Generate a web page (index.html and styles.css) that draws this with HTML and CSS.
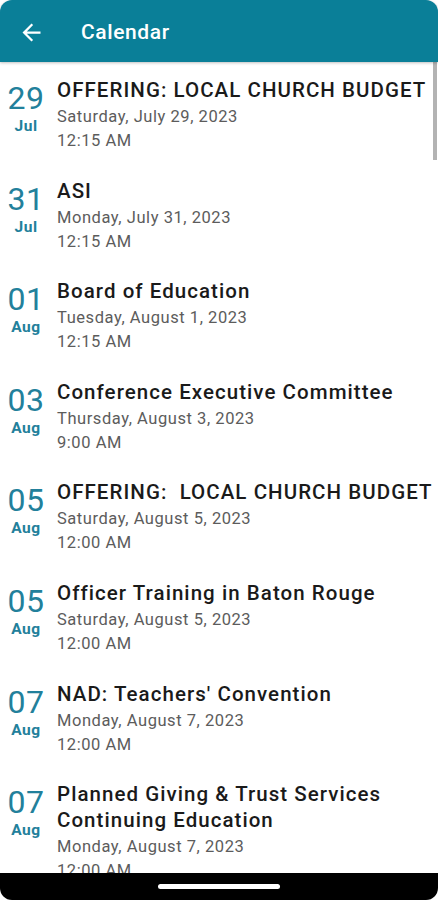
FILE: index.html
```html
<!DOCTYPE html>
<html>
<head>
    <meta charset="utf-8" />
    <title>Calendar</title>
    <meta name="viewport" content="width=device-width, initial-scale=1">
    <link rel="stylesheet" href="styles.css">
</head>
<body>
    <div class="screen">
        <div class="app-bar">
            <svg class="back" viewBox="0 0 24 24" width="27" height="27">
                <path d="M20 11H7.83l5.59-5.59L12 4l-8 8 8 8 1.41-1.41L7.83 13H20v-2z" fill="#fff"/>
            </svg>
            <h1>Calendar</h1>
        </div>

        <div class="events">
            <div class="scrollbar"></div>

            <div class="event">
                <div class="day">
                    <p class="num">29</p>
                    <p class="month">Jul</p>
                </div>
                <div class="info">
                    <p class="title">OFFERING: LOCAL CHURCH BUDGET</p>
                    <p class="when">Saturday, July 29, 2023</p>
                    <p class="when">12:15 AM</p>
                </div>
            </div>
            <div class="event">
                <div class="day">
                    <p class="num">31</p>
                    <p class="month">Jul</p>
                </div>
                <div class="info">
                    <p class="title">ASI</p>
                    <p class="when">Monday, July 31, 2023</p>
                    <p class="when">12:15 AM</p>
                </div>
            </div>
            <div class="event">
                <div class="day">
                    <p class="num">01</p>
                    <p class="month">Aug</p>
                </div>
                <div class="info">
                    <p class="title">Board of Education</p>
                    <p class="when">Tuesday, August 1, 2023</p>
                    <p class="when">12:15 AM</p>
                </div>
            </div>
            <div class="event">
                <div class="day">
                    <p class="num">03</p>
                    <p class="month">Aug</p>
                </div>
                <div class="info">
                    <p class="title">Conference Executive Committee</p>
                    <p class="when">Thursday, August 3, 2023</p>
                    <p class="when">9:00 AM</p>
                </div>
            </div>
            <div class="event">
                <div class="day">
                    <p class="num">05</p>
                    <p class="month">Aug</p>
                </div>
                <div class="info">
                    <p class="title">OFFERING:&nbsp; LOCAL CHURCH BUDGET</p>
                    <p class="when">Saturday, August 5, 2023</p>
                    <p class="when">12:00 AM</p>
                </div>
            </div>
            <div class="event">
                <div class="day">
                    <p class="num">05</p>
                    <p class="month">Aug</p>
                </div>
                <div class="info">
                    <p class="title">Officer Training in Baton Rouge</p>
                    <p class="when">Saturday, August 5, 2023</p>
                    <p class="when">12:00 AM</p>
                </div>
            </div>
            <div class="event">
                <div class="day">
                    <p class="num">07</p>
                    <p class="month">Aug</p>
                </div>
                <div class="info">
                    <p class="title">NAD: Teachers' Convention</p>
                    <p class="when">Monday, August 7, 2023</p>
                    <p class="when">12:00 AM</p>
                </div>
            </div>
            <div class="event">
                <div class="day">
                    <p class="num">07</p>
                    <p class="month">Aug</p>
                </div>
                <div class="info">
                    <p class="title">Planned Giving &amp; Trust Services Continuing Education</p>
                    <p class="when">Monday, August 7, 2023</p>
                    <p class="when">12:00 AM</p>
                </div>
            </div>
        </div>

        <div class="nav-bar">
            <div class="pill"></div>
        </div>
    </div>
</body>
</html>
```

FILE: styles.css
```css
* {
    padding: 0;
    margin: 0;
}

body {
    background-color: #fff;
    font-family: Roboto, "Noto Sans", sans-serif;
}

.screen {
    width: 438px;
    height: 900px;
    display: flex;
    flex-direction: column;
    overflow: hidden;
}

.app-bar {
    height: 62px;
    flex: 0 0 62px;
    background-color: #0a7f98;
    border-radius: 12px 12px 0 0;
    display: flex;
    align-items: center;
    box-shadow: 0 1px 3px rgba(0, 0, 0, 0.25);
    position: relative;
    z-index: 1;
}

.app-bar .back {
    margin-left: 18px;
    margin-top: 2px;
}

.app-bar h1 {
    margin-left: 36px;
    color: #fff;
    font-size: 21px;
    font-weight: 500;
    letter-spacing: 0.6px;
    margin-top: 2px;
}

.events {
    flex: 1;
    overflow: hidden;
    position: relative;
}

.scrollbar {
    position: absolute;
    top: 0;
    right: 1px;
    width: 4px;
    height: 98px;
    background-color: #b3b3b3;
}

.event {
    display: flex;
    padding: 15px 0 9.6px 4px;
}

.day {
    width: 44px;
    flex: 0 0 44px;
    margin-right: 9px;
    margin-top: 3px;
    text-align: center;
    color: #22809b;
}

.day .num {
    font-size: 32px;
    line-height: 36px;
    letter-spacing: 0.5px;
}

.day .month {
    font-size: 15.5px;
    font-weight: bold;
    line-height: 20px;
    letter-spacing: 0.6px;
}

.info .title {
    font-size: 20.5px;
    font-weight: 500;
    line-height: 26px;
    letter-spacing: 1.05px;
    color: #1a1a1a;
}

.info .title + .when {
    margin-top: 2px;
}

.info .when {
    font-size: 16.5px;
    line-height: 24px;
    letter-spacing: 0.55px;
    color: #5c5c5c;
}

.nav-bar {
    height: 27px;
    flex: 0 0 27px;
    background-color: #000;
    border-radius: 0 0 12px 12px;
    display: flex;
    justify-content: center;
    align-items: center;
}

.nav-bar .pill {
    width: 122px;
    height: 5px;
    border-radius: 3px;
    background-color: #fff;
}
```
